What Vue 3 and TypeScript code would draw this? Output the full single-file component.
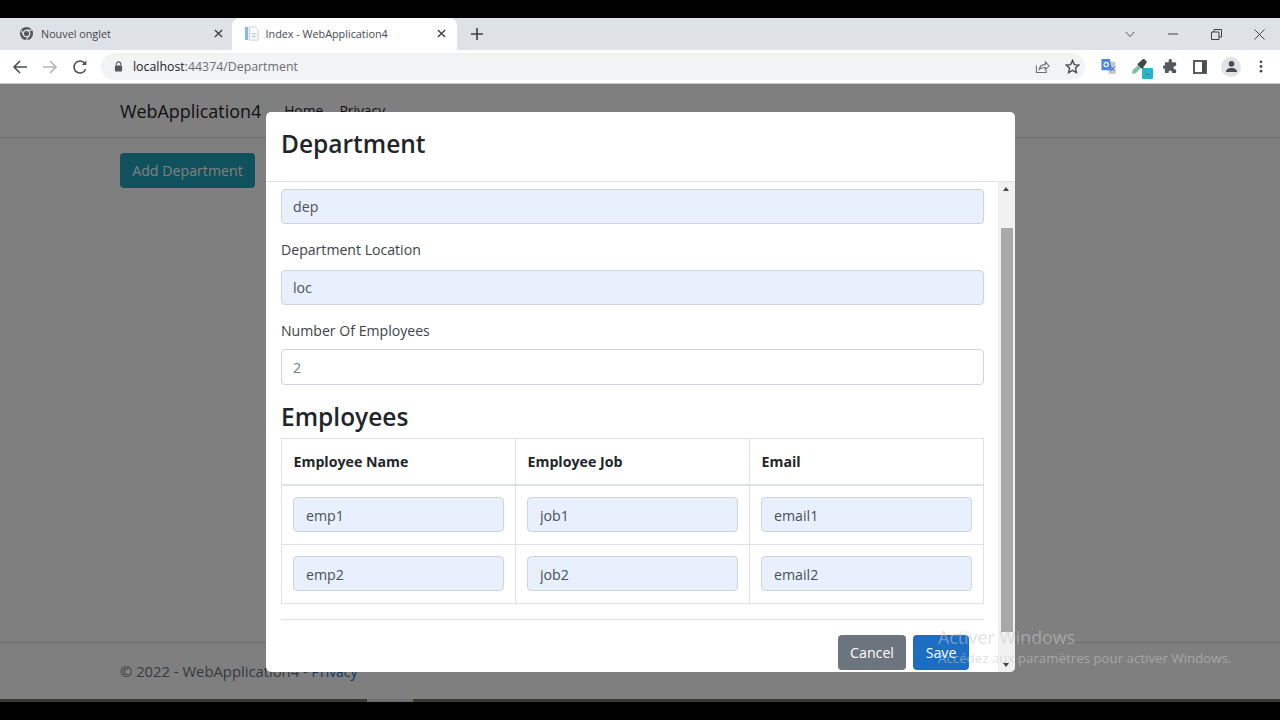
<template>
  <div class="screen">
    <div class="browser">
      <div class="tabstrip">
        <div class="tab">
          <svg class="favicon" viewBox="0 0 16 16">
            <circle cx="8" cy="8" r="7" fill="#55585c" />
            <circle cx="8" cy="8" r="3.4" fill="#55585c" stroke="#dee1e6" stroke-width="1.3" />
            <path d="M8 4.4h6M5 9.8 2.2 4.6M10.9 9.9 7.8 15" stroke="#dee1e6" stroke-width="1.1" fill="none" />
          </svg>
          <span class="tab-title">Nouvel onglet</span>
          <svg class="tab-close" viewBox="0 0 10 10"><path d="M1 1l8 8M9 1l-8 8" /></svg>
        </div>
        <div class="tab active">
          <svg class="favicon" viewBox="0 0 16 16">
            <path d="M1 1h3.5v14H1z" fill="#8ab8e4" />
            <path d="M6 1h6l3 3v11H6z" fill="#fff" stroke="#c6ccd4" />
            <path d="M7.5 8h6M7.5 11h6M10.5 8v5" stroke="#b9cfe6" fill="none" />
          </svg>
          <span class="tab-title">Index - WebApplication4</span>
          <svg class="tab-close" viewBox="0 0 10 10"><path d="M1 1l8 8M9 1l-8 8" /></svg>
        </div>
        <svg class="new-tab" viewBox="0 0 12 12"><path d="M6 0v12M0 6h12" /></svg>
        <div class="win-controls">
          <svg class="win-chevron" viewBox="0 0 12 8"><path d="M1 1l5 5.5L11 1" /></svg>
          <svg class="win-min" viewBox="0 0 10 2"><path d="M0 1h10" /></svg>
          <svg class="win-restore" viewBox="0 0 11 11"><path d="M.5 3h7.5v7.5H.5zM3 3V.5h7.5V8H8" /></svg>
          <svg class="win-x" viewBox="0 0 11 11"><path d="M.5.5l10 10M10.5.5l-10 10" /></svg>
        </div>
      </div>

      <div class="toolbar">
        <svg class="nav-icon" viewBox="0 0 16 16"><path d="M15 8H2M8 2 2 8l6 6" stroke="#4a4d52" /></svg>
        <svg class="nav-icon" viewBox="0 0 16 16"><path d="M1 8h13M8 2l6 6-6 6" stroke="#b4b6ba" /></svg>
        <svg class="nav-icon" viewBox="0 0 16 16">
          <path d="M13.6 10.2A6 6 0 1 1 13 4.6" stroke="#4a4d52" />
          <path d="M14.4 1.4v4.6H9.8z" fill="#4a4d52" />
        </svg>
        <div class="omnibox">
          <svg class="lock" viewBox="0 0 10 12">
            <path d="M2.5 5V3.4a2.5 2.5 0 0 1 5 0V5" fill="none" stroke="#55585c" stroke-width="1.2" />
            <rect x="1" y="5" width="8" height="6.5" rx="1" fill="#55585c" />
          </svg>
          <span class="url"><span class="host">localhost</span>:44374/Department</span>
          <svg class="omni-share" viewBox="0 0 16 16">
            <path d="M1.5 7v7.5h10.5V12" fill="none" stroke="#6a6d72" stroke-width="1.1" />
            <path d="M4.5 11c.5-3.5 3-5 6.5-5V3l4 4.5L11 11.5V9c-3 0-5 .2-6.5 2z" fill="none" stroke="#6a6d72" stroke-width="1.1" />
          </svg>
          <svg class="omni-star" viewBox="0 0 16 16">
            <path d="M8 1.5l2 4.5 4.8.5-3.6 3.2 1 4.8L8 12.1 3.8 14.5l1-4.8L1.2 6.5 6 6z" fill="none" stroke="#4a4d52" stroke-width="1.5" />
          </svg>
        </div>
        <div class="ext-icons">
          <svg class="ext translate" viewBox="0 0 16 18">
            <path d="M6 4h9v13H8z" fill="#c4c9d2" />
            <path d="M0 1h9l2 12H0z" fill="#4a86e8" />
            <circle cx="5" cy="7" r="2.3" fill="none" stroke="#fff" stroke-width="1.2" />
            <path d="M10 9l4 5M14 9l-4 5" stroke="#68707c" />
          </svg>
          <div class="ext dropper">
            <svg viewBox="0 0 20 20">
              <path d="M0 20 1 15 9 7l4 4-8 8z" fill="#7cc0a8" />
              <path d="M9 5l5-4.5a2 2 0 0 1 3 0l2 2a2 2 0 0 1 0 3L15 11l1 1-2 2-7-7z" fill="#45484c" />
            </svg>
            <span class="ext-badge">-</span>
          </div>
          <svg class="ext puzzle" viewBox="0 0 16 16">
            <path d="M6 1.5a1.8 1.8 0 0 1 3.5 0V3.5H13a1 1 0 0 1 1 1V7.5h-1a1.8 1.8 0 0 0 0 3.6h1V14a1 1 0 0 1-1 1H9.5v-1a1.8 1.8 0 0 0-3.6 0v1H3a1 1 0 0 1-1-1V10.5H1a1.8 1.8 0 0 1 0-3.5h1V4.5a1 1 0 0 1 1-1h3z" fill="#55585c" />
          </svg>
          <svg class="ext side" viewBox="0 0 14 14">
            <rect x="1" y="1" width="12" height="12" fill="#fff" stroke="#4a4d52" stroke-width="1.8" />
            <rect x="9" y="1" width="4" height="12" fill="#4a4d52" />
          </svg>
          <div class="avatar">
            <svg viewBox="0 0 14 14">
              <circle cx="7" cy="4.2" r="3" fill="#4a4d52" />
              <path d="M1 13c0-3 2.5-4.5 6-4.5s6 1.5 6 4.500z" fill="#4a4d52" />
            </svg>
          </div>
          <svg class="ext dots" viewBox="0 0 4 14">
            <circle cx="2" cy="2" r="1.5" /><circle cx="2" cy="7" r="1.5" /><circle cx="2" cy="12" r="1.5" />
          </svg>
        </div>
      </div>
    </div>

    <div class="page">
      <header class="navbar">
        <span class="brand">WebApplication4</span>
        <nav class="nav-links"><a>Home</a><a>Privacy</a></nav>
      </header>
      <main class="content">
        <button class="btn btn-add">Add Department</button>
      </main>
      <footer class="footer">© 2022 - WebApplication4 - <a>Privacy</a></footer>

      <div class="backdrop">
        <div class="modal">
          <div class="modal-header"><h2>Department</h2></div>
          <div class="modal-main">
            <div class="modal-body">
              <input class="field filled first" value="dep" readonly />
              <label>Department Location</label>
              <input class="field filled" value="loc" readonly />
              <label>Number Of Employees</label>
              <input class="field plain" value="2" readonly />
              <h3>Employees</h3>
              <table>
                <thead>
                  <tr><th>Employee Name</th><th>Employee Job</th><th>Email</th></tr>
                </thead>
                <tbody>
                  <tr v-for="emp in employees" :key="emp.name">
                    <td><input class="field filled" :value="emp.name" readonly /></td>
                    <td><input class="field filled" :value="emp.job" readonly /></td>
                    <td><input class="field filled" :value="emp.email" readonly /></td>
                  </tr>
                </tbody>
              </table>
              <div class="modal-footer">
                <button class="btn btn-cancel">Cancel</button>
                <button class="btn btn-save">Save</button>
              </div>
            </div>
            <div class="scrollbar">
              <span class="arrow up"></span>
              <span class="thumb"></span>
              <span class="arrow down"></span>
            </div>
          </div>
        </div>
      </div>

      <div class="activate">
        <div class="activate-title">Activer Windows</div>
        <div class="activate-sub">Accédez aux paramètres pour activer Windows.</div>
      </div>
    </div>
    <div class="taskbar"><span class="task-mark"></span></div>
  </div>
</template>

<script setup lang="ts">
const employees = [
  { name: 'emp1', job: 'job1', email: 'email1' },
  { name: 'emp2', job: 'job2', email: 'email2' },
]
</script>

<style>
html, body {
  margin: 0;
  background: #000;
  overflow: hidden;
}
</style>

<style scoped>
.screen {
  width: 1280px;
  height: 720px;
  display: flex;
  flex-direction: column;
  padding: 18px 0;
  box-sizing: border-box;
  background: #000;
  font-family: "Open Sans", "Noto Sans", sans-serif;
  color: #212529;
}

.tabstrip {
  height: 32px;
  background: #dee1e6;
  display: flex;
  align-items: center;
  font-size: 10.8px;
  color: #45484c;
}
.tab {
  width: 225px;
  height: 32px;
  box-sizing: border-box;
  padding: 0 8px 2px 19px;
  display: flex;
  align-items: center;
  gap: 7px;
}
.tab:first-child {
  width: 232px;
  padding-right: 6px;
}
.tab.active {
  background: #fff;
  border-radius: 8px 8px 0 0;
  padding-left: 12px;
  gap: 6.5px;
}
.favicon {
  width: 15px;
  height: 15px;
  flex: none;
}
.tab-title {
  flex: 1;
}
.tab-close {
  width: 9px;
  height: 9px;
  fill: none;
  stroke: #3c4043;
  stroke-width: 1.5;
  margin-right: 3px;
}
.new-tab {
  width: 12px;
  height: 12px;
  margin-left: 14px;
  stroke: #3c4043;
  stroke-width: 1.6;
}
.win-controls {
  margin-left: auto;
  display: flex;
  align-items: center;
  fill: none;
  stroke: #3c4043;
  stroke-width: 1;
}
.win-chevron {
  width: 10px;
  height: 7px;
  margin-right: 33px;
}
.win-min {
  width: 10px;
  height: 2px;
  margin-right: 33px;
}
.win-restore {
  width: 11px;
  height: 11px;
  margin-right: 32px;
}
.win-x {
  width: 11px;
  height: 11px;
  margin-right: 15px;
}

.toolbar {
  height: 34px;
  background: #fff;
  display: flex;
  align-items: center;
  padding-left: 12px;
  box-sizing: border-box;
  border-bottom: 1px solid #c8c9cb;
}
.nav-icon {
  width: 16px;
  height: 16px;
  margin-right: 14px;
  fill: none;
  stroke-width: 1.6;
}
.omnibox {
  width: 984px;
  height: 27px;
  margin-left: -1px;
  border-radius: 14px;
  background: #f1f3f4;
  display: flex;
  align-items: center;
  padding: 0 4px 0 13px;
  box-sizing: border-box;
  font-size: 12.35px;
  color: #6a6d72;
}
.lock {
  width: 9px;
  height: 11px;
  margin-right: 10px;
}
.url {
  flex: 1;
}
.host {
  color: #222;
}
.omni-share {
  width: 15px;
  height: 15px;
  margin-right: 15px;
}
.omni-star {
  width: 15px;
  height: 15px;
  margin-right: 1px;
}
.ext-icons {
  display: flex;
  align-items: center;
  margin-left: 16px;
}
.ext {
  flex: none;
}
.translate {
  width: 16px;
  height: 17px;
  margin-right: 15px;
}
.dropper {
  position: relative;
  width: 21px;
  height: 20px;
  margin-right: 10px;
}
.dropper svg {
  width: 15px;
  height: 15px;
}
.ext-badge {
  position: absolute;
  right: 0;
  bottom: -2px;
  width: 11px;
  height: 11px;
  background: #2ab3c4;
  border-radius: 1px;
  font-size: 8px;
  line-height: 10px;
  text-align: center;
  color: #333;
}
.puzzle {
  width: 15px;
  height: 15px;
  margin-right: 15px;
}
.side {
  width: 14px;
  height: 14px;
  margin-right: 14px;
}
.avatar {
  width: 20px;
  height: 20px;
  border-radius: 50%;
  background: #e1e3e8;
  display: flex;
  align-items: center;
  justify-content: center;
  margin-right: 18px;
}
.avatar svg {
  width: 13px;
  height: 13px;
}
.dots {
  width: 4px;
  height: 13px;
  fill: #4a4d52;
}

.page {
  position: relative;
  flex: 1;
  background: #fff;
  display: flex;
  flex-direction: column;
  overflow: hidden;
}
.navbar {
  height: 54px;
  box-sizing: border-box;
  border-bottom: 1px solid #d9d9d9;
  padding-left: 120px;
  display: flex;
  align-items: center;
  gap: 23px;
}
.brand {
  font-size: 17.9px;
}
.nav-links {
  display: flex;
  gap: 16px;
  font-size: 13.9px;
}
.content {
  flex: 1;
  padding: 15px 0 0 120px;
}
.btn {
  font-family: inherit;
  font-size: 14.2px;
  height: 35px;
  border: none;
  border-radius: 4px;
  color: #fff;
  padding: 0;
}
.btn-add {
  width: 135px;
  background: #1ea2b8;
}
.footer {
  height: 57px;
  box-sizing: border-box;
  border-top: 1px solid #d9d9d9;
  padding: 18px 0 0 120px;
  font-size: 14.8px;
  color: #6c757d;
}
.footer a {
  color: #1b6ec2;
  font-size: 13.9px;
}

.backdrop {
  position: absolute;
  inset: 0;
  background: rgba(0, 0, 0, 0.5);
  display: flex;
  justify-content: center;
  padding-top: 28px;
}
.modal {
  width: 749px;
  height: 560px;
  margin-left: 1px;
  background: #fff;
  border-radius: 5px;
  display: flex;
  flex-direction: column;
  overflow: hidden;
}
.modal-header {
  height: 70px;
  box-sizing: border-box;
  border-bottom: 1px solid #dee2e6;
  padding: 14px 15px 0;
}
.modal-header h2 {
  margin: 0;
  font-size: 24.5px;
  font-weight: 600;
  line-height: 36px;
}
.modal-main {
  flex: 1;
  display: flex;
  min-height: 0;
}
.modal-body {
  flex: 1;
  padding: 7px 14px 0 15px;
  min-width: 0;
  overflow: hidden;
}
.scrollbar {
  width: 17px;
  flex: none;
  background: #f1f1f1;
  position: relative;
}
.thumb {
  position: absolute;
  left: 3px;
  right: 2px;
  top: 46px;
  height: 404px;
  background: #a8a8a8;
}
.arrow {
  position: absolute;
  left: 5px;
  border-left: 3.5px solid transparent;
  border-right: 3.5px solid transparent;
}
.arrow.up {
  top: 5px;
  border-bottom: 4px solid #444;
}
.arrow.down {
  bottom: 5px;
  border-top: 4px solid #444;
}
.field {
  display: block;
  width: 100%;
  height: 35px;
  box-sizing: border-box;
  border: 1px solid #ced4da;
  border-radius: 4px;
  padding: 0 11px;
  font-family: inherit;
  font-size: 14.2px;
  color: #495057;
  background: #fff;
  outline: none;
}
.field.filled {
  background: #e8f0fe;
}
.field.plain {
  color: #747b83;
  height: 36px;
}
label {
  display: block;
  font-size: 14.1px;
  line-height: 22px;
  margin: 15px 0 9px;
  color: #3c4248;
}
label + .plain {
  margin-top: -2px;
}
h3 {
  margin: 17px 0 6px;
  font-size: 24.5px;
  font-weight: 600;
  line-height: 30px;
}
table {
  width: 100%;
  border-collapse: collapse;
  table-layout: fixed;
  font-size: 14.2px;
}
th, td {
  border: 1px solid #dee2e6;
  padding: 11px 11px 12px;
  text-align: left;
}
td .field {
  padding: 2px 12px 0;
}
th {
  height: 46px;
  box-sizing: border-box;
  font-weight: 700;
  border-bottom-width: 2px;
  padding: 0 11.5px;
}
.modal-footer {
  border-top: 1px solid #dee2e6;
  margin-top: 15px;
  padding-top: 15px;
  padding-right: 15px;
  display: flex;
  justify-content: flex-end;
  gap: 7px;
}
.btn-cancel {
  width: 68px;
  background: #6c757d;
}
.btn-save {
  width: 56px;
  background: #1b6ec2;
}

.activate {
  position: absolute;
  left: 938px;
  top: 542px;
  color: rgba(200, 200, 200, 0.55);
  pointer-events: none;
}
.activate-title {
  font-size: 17.8px;
  line-height: 22px;
}
.activate-sub {
  font-size: 13.3px;
  line-height: 20px;
}
.taskbar {
  height: 3px;
  background: #3b3b30;
  position: relative;
}
.task-mark {
  display: block;
  position: absolute;
  left: 367px;
  width: 46px;
  height: 3px;
  background: #6e6e6e;
}
</style>
